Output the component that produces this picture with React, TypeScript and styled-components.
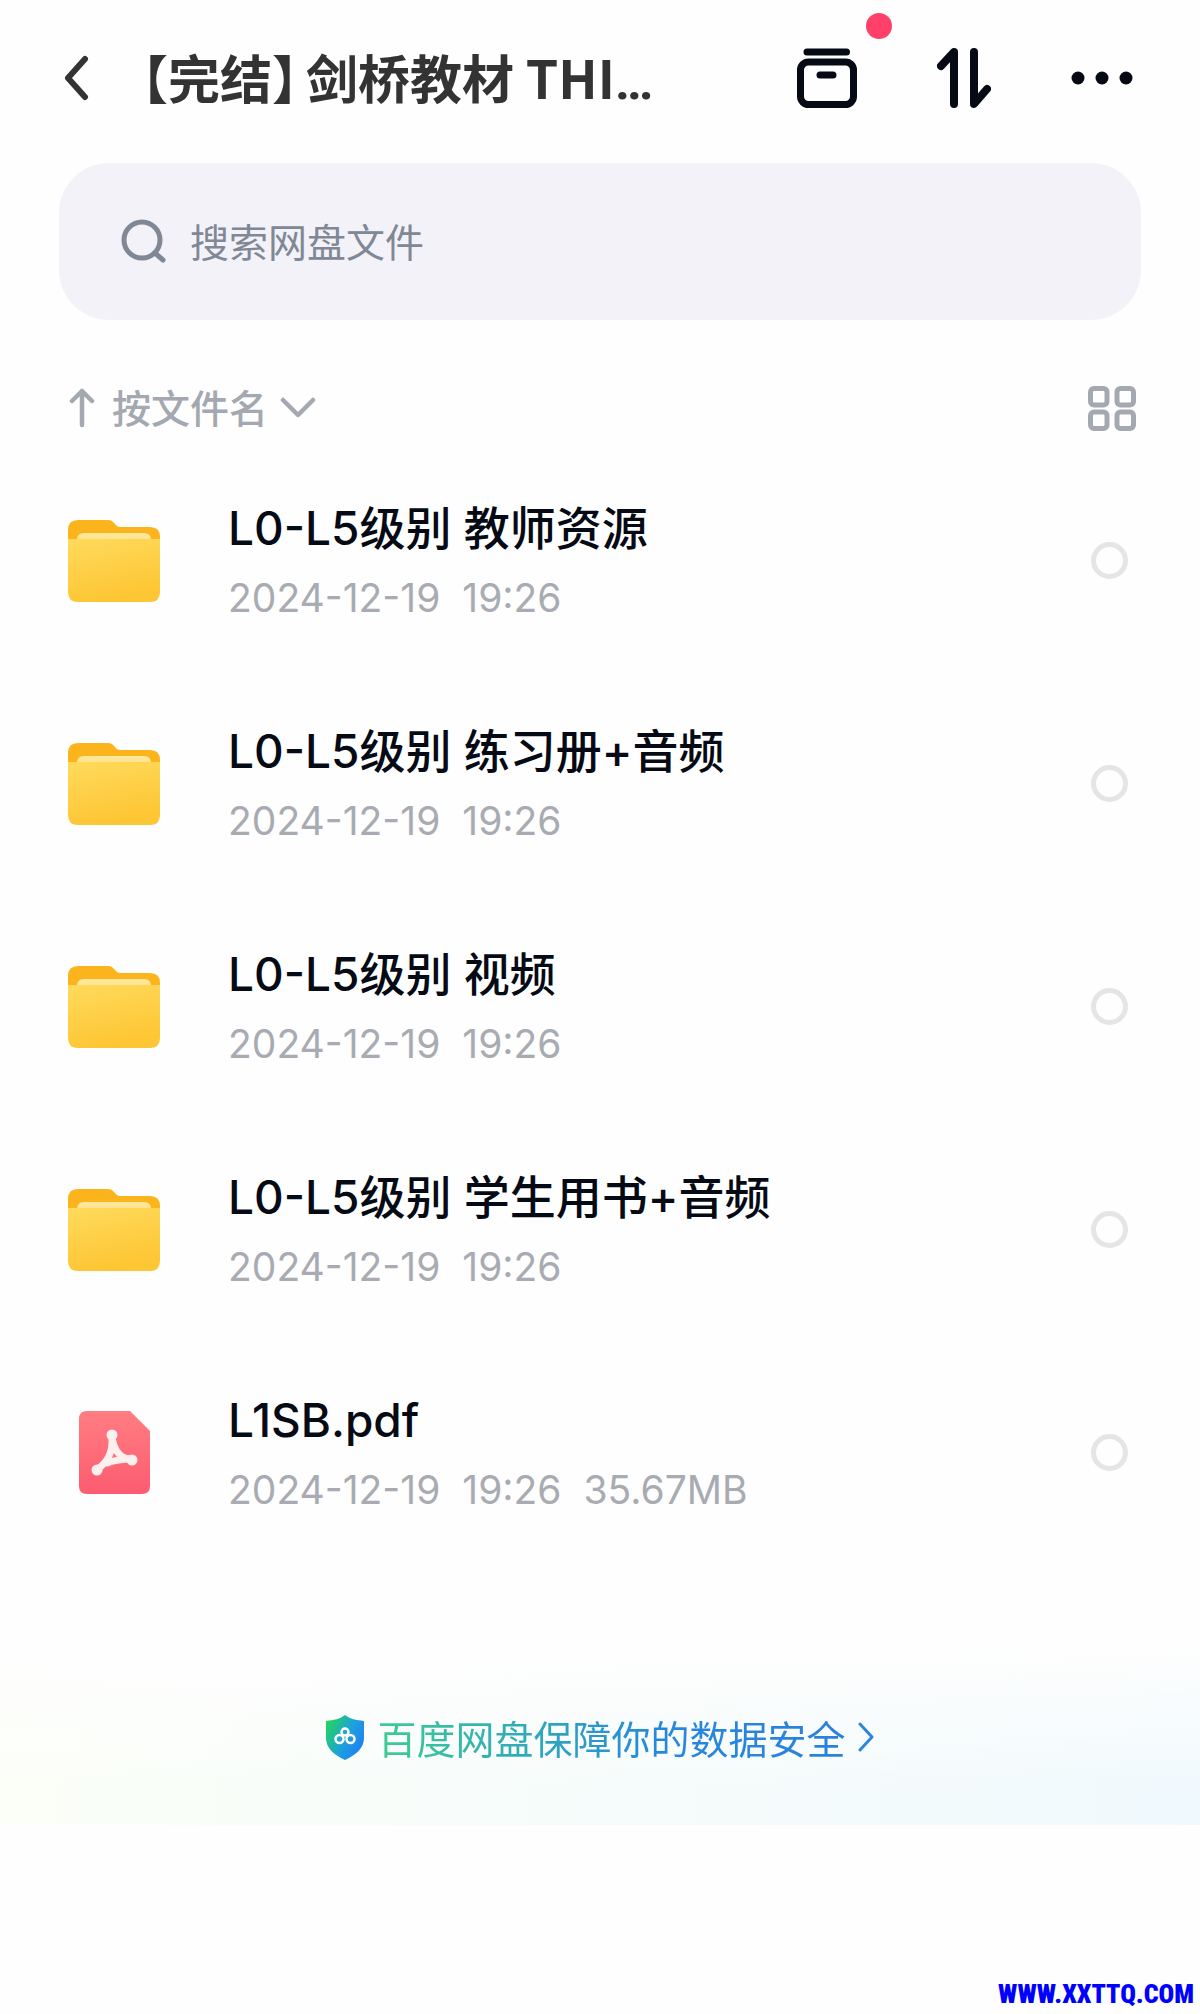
import React from "react";
import styled, { createGlobalStyle } from "styled-components";

const GlobalStyle = createGlobalStyle`
  * { box-sizing: border-box; }
  body {
    margin: 0;
    background: #fefefe;
    font-family: Inter, "Noto Sans CJK SC", sans-serif;
    color: #050a14;
  }
  button, input { font: inherit; }
`;

const Page = styled.div`
  min-height: 100vh;
  display: flex;
  flex-direction: column;
`;

const Header = styled.header`
  display: flex;
  align-items: center;
  height: 156px;
  padding: 0 67px 0 64px;
`;

const IconButton = styled.button`
  position: relative;
  display: flex;
  padding: 0;
  border: 0;
  background: none;
  color: inherit;
  cursor: pointer;
`;

const Title = styled.h1`
  flex: 1;
  min-width: 0;
  margin: 0 0 0 50px;
  padding-top: 2px;
  font-family: "Noto Sans CJK SC", sans-serif;
  font-size: 52px;
  line-height: 72px;
  font-weight: 700;
  color: #333;
  white-space: nowrap;
`;

const Tag = styled.span`
  margin-right: 8px;
  font-feature-settings: "halt";
`;

const Dots = styled.span`
  font-family: Roboto, sans-serif;
`;

const Actions = styled.div`
  display: flex;
  align-items: center;
  gap: 80px;
`;

const Badge = styled.span`
  position: absolute;
  top: -35px;
  left: 69px;
  width: 26px;
  height: 26px;
  border-radius: 50%;
  background: #ff4069;
`;

const SearchBox = styled.label`
  display: flex;
  align-items: center;
  gap: 24px;
  height: 157px;
  margin: 7px 59px 0;
  padding: 0 62px 2px;
  border-radius: 50px;
  background: #f2f2f8;
  color: #808896;
`;

const SearchInput = styled.input`
  flex: 1;
  min-width: 0;
  padding: 0 0 2px;
  border: 0;
  outline: 0;
  background: none;
  font-family: "Noto Sans CJK SC", sans-serif;
  font-size: 39px;
  line-height: 56px;
  color: #808896;
  &::placeholder { color: #808896; opacity: 1; }
`;

const Toolbar = styled.div`
  display: flex;
  align-items: center;
  justify-content: space-between;
  padding: 58px 64px 11px 69px;
  color: #a3a8b1;
`;

const SortButton = styled(IconButton)`
  align-items: center;
  gap: 17px;
  font-family: "Noto Sans CJK SC", sans-serif;
  font-size: 39px;
  line-height: 56px;
  font-weight: 500;
`;

const SortLabel = styled.span`
  margin-right: -5px;
  padding-bottom: 4px;
`;

const FileList = styled.ul`
  margin: 0;
  padding: 0;
  list-style: none;
`;

const FileRow = styled.li`
  display: grid;
  grid-template-columns: 92px 1fr 37px;
  column-gap: 68px;
  align-items: center;
  height: 223px;
  padding: 0 72px 0 68px;
`;

const FileIcon = styled.div`
  display: flex;
  justify-content: center;
`;

const FileText = styled.label`
  display: block;
  min-width: 0;
  padding-top: 2px;
`;

const FileName = styled.span`
  display: block;
  font-size: 46px;
  line-height: 72px;
  font-weight: 500;
`;

const FileMeta = styled.span`
  display: block;
  font-size: 39px;
  line-height: 68px;
  font-weight: 400;
  color: #a8acb2;
  white-space: pre;
`;

const Check = styled.input`
  appearance: none;
  width: 37px;
  height: 37px;
  margin: 0;
  border: 5px solid #e5e5e5;
  border-radius: 50%;
  cursor: pointer;
  &:checked { border-color: #1f86f0; background: #1f86f0; }
`;

const Banner = styled.footer`
  display: flex;
  justify-content: center;
  align-items: center;
  height: 177px;
  margin-top: 84px;
  background:
    linear-gradient(to bottom, #fefefe 0%, #fefefe00 80%),
    linear-gradient(to right, #fcfff8 0%, #f8fdfa 30%, #f5fbfb 60%, #f0f9fd 100%);
`;

const BannerLink = styled.a`
  display: flex;
  align-items: center;
  gap: 12px;
  text-decoration: none;
  color: #2b87dc;
`;

const BannerText = styled.span`
  font-family: "Noto Sans CJK SC", sans-serif;
  font-size: 39px;
  line-height: 56px;
  background: linear-gradient(to right, #3dcc92 0%, #2fa6bd 35%, #2688dc 60%, #2b80dc 100%);
  background-clip: text;
  color: transparent;
`;

const Watermark = styled.a`
  align-self: flex-end;
  margin-top: auto;
  padding: 0 6px 4px 0;
  font-family: Impact, "Roboto Condensed", "Liberation Sans Narrow", "Liberation Sans", sans-serif;
  font-size: 26px;
  line-height: 32px;
  font-weight: 900;
  color: #0000ff;
  text-decoration: none;
`;

const BackIcon = () => (
  <svg width="28" height="48" viewBox="0 0 28 48" fill="none" stroke="#333" strokeWidth="6" strokeLinecap="round" strokeLinejoin="round">
    <path d="M21 5 4 24l17 19" />
  </svg>
);

const BoxIcon = () => (
  <svg width="60" height="60" viewBox="0 0 60 60" fill="none" stroke="currentColor" strokeWidth="7" strokeLinecap="round">
    <path d="M10 4h39.500M23 27h13" />
    <rect x="3.500" y="14" width="53" height="42.500" rx="8" />
  </svg>
);

const TransferIcon = () => (
  <svg width="54" height="62" viewBox="0 0 54 62" fill="none" stroke="currentColor" strokeWidth="8" strokeLinecap="round" strokeLinejoin="round">
    <path d="M17 57V5L4 19M37 5v52l13-15" />
  </svg>
);

const MoreIcon = () => (
  <svg width="62" height="14" viewBox="0 0 62 14" fill="currentColor">
    <circle cx="7" cy="7" r="6.500" />
    <circle cx="31" cy="7" r="6.500" />
    <circle cx="55" cy="7" r="6.500" />
  </svg>
);

const SearchIcon = () => (
  <svg width="45" height="44" viewBox="0 0 45 44" fill="none" stroke="currentColor" strokeWidth="5" strokeLinecap="round">
    <circle cx="21" cy="21" r="18" />
    <path d="m34 34 8 7" />
  </svg>
);

const ArrowUpIcon = () => (
  <svg width="26" height="40" viewBox="0 0 26 40" fill="none" stroke="currentColor" strokeWidth="4.500" strokeLinecap="round" strokeLinejoin="round">
    <path d="M13 37V3M3 13 13 3l10 10" />
  </svg>
);

const ChevronDownIcon = () => (
  <svg width="36" height="22" viewBox="0 0 36 22" fill="none" stroke="currentColor" strokeWidth="4.500" strokeLinecap="round" strokeLinejoin="round">
    <path d="m3 3 15 15L33 3" />
  </svg>
);

const GridIcon = () => (
  <svg width="48" height="45" viewBox="0 0 48 45" fill="none" stroke="currentColor" strokeWidth="5">
    <rect x="2.500" y="2.500" width="16.500" height="16.500" rx="3.500" />
    <rect x="29" y="2.500" width="16.500" height="16.500" rx="3.500" />
    <rect x="2.500" y="26" width="16.500" height="16.500" rx="3.500" />
    <rect x="29" y="26" width="16.500" height="16.500" rx="3.500" />
  </svg>
);

const FolderIcon = () => (
  <svg width="92" height="82" viewBox="0 0 92 82">
    <defs>
      <linearGradient id="folderFront" x1="0" y1="0" x2="0.300" y2="1">
        <stop offset="0" stopColor="#ffda5c" />
        <stop offset="1" stopColor="#fdc634" />
      </linearGradient>
      <linearGradient id="folderPaper" x1="0" y1="0" x2="0" y2="1">
        <stop offset="0" stopColor="#ffe9a0" />
        <stop offset="1" stopColor="#ffe28a" />
      </linearGradient>
    </defs>
    <path d="M0 10Q0 0 10 0h30q4 0 6 3l3 3q1 1 4 1h29q10 0 10 10v14H0Z" fill="#fbb41c" />
    <path d="M9 20q0-7 7-7h60q7 0 7 7H9Z" fill="url(#folderPaper)" />
    <path d="M0 19h92v53q0 10-10 10H10q-10 0-10-10Z" fill="url(#folderFront)" />
  </svg>
);

const PdfIcon = () => (
  <svg width="71" height="83" viewBox="0 0 71 83">
    <defs>
      <linearGradient id="pdfSheet" x1="0" y1="0" x2="0" y2="1">
        <stop offset="0" stopColor="#ff7d82" />
        <stop offset="1" stopColor="#fd5c70" />
      </linearGradient>
    </defs>
    <path d="M8 0h43l20 20v55q0 8-8 8H8q-8 0-8-8V8q0-8 8-8Z" fill="url(#pdfSheet)" />
    <g fill="none" stroke="#fff0f0" strokeWidth="7" strokeLinecap="round" strokeLinejoin="round">
      <path d="M33 23c0 9 1 14-3 22-3 6-6 9-11 13" />
      <path d="M33 23c0 9 2 15 8 21 3 3 6 4 12 4" />
      <path d="M53 48c-9 0-17 1-25 4" />
    </g>
    <circle cx="33" cy="24" r="5.500" fill="#fff0f0" />
    <circle cx="18" cy="59" r="5.500" fill="#fff0f0" />
    <circle cx="53" cy="49" r="5.500" fill="#fff0f0" />
  </svg>
);

const ShieldIcon = () => (
  <svg width="40" height="46" viewBox="0 0 40 46">
    <defs>
      <linearGradient id="shieldFill" x1="0" y1="0.200" x2="1" y2="0.800">
        <stop offset="0" stopColor="#22d65c" />
        <stop offset="0.550" stopColor="#1d9fe0" />
        <stop offset="1" stopColor="#1f7bf5" />
      </linearGradient>
    </defs>
    <path d="M20 1c5 4 11 5 19 6v17c0 10-8 17-19 22C9 41 1 34 1 24V7c8-1 14-2 19-6Z" fill="url(#shieldFill)" />
    <g fill="none" stroke="#fff" strokeWidth="2.500">
      <circle cx="20" cy="18" r="3.500" />
      <circle cx="14.500" cy="25" r="4" />
      <circle cx="25.500" cy="25" r="4" />
    </g>
  </svg>
);

const ChevronRightIcon = () => (
  <svg width="17" height="32" viewBox="0 0 17 32" fill="none" stroke="currentColor" strokeWidth="3" strokeLinecap="round" strokeLinejoin="round">
    <path d="m2 3 12 13L2 29" />
  </svg>
);

type FileItem = { kind: "folder" | "pdf"; name: string; meta: string };

const files: FileItem[] = [
  { kind: "folder", name: "L0-L5级别 教师资源", meta: "2024-12-19  19:26" },
  { kind: "folder", name: "L0-L5级别 练习册+音频", meta: "2024-12-19  19:26" },
  { kind: "folder", name: "L0-L5级别 视频", meta: "2024-12-19  19:26" },
  { kind: "folder", name: "L0-L5级别 学生用书+音频", meta: "2024-12-19  19:26" },
  { kind: "pdf", name: "L1SB.pdf", meta: "2024-12-19  19:26  35.67MB" },
];

export default function App() {
  return (
    <Page>
      <GlobalStyle />
      <Header>
        <IconButton type="button" aria-label="返回"><BackIcon /></IconButton>
        <Title><Tag>【完结】</Tag>剑桥教材 THI<Dots>…</Dots></Title>
        <Actions>
          <IconButton type="button" aria-label="传输列表"><BoxIcon /><Badge /></IconButton>
          <IconButton type="button" aria-label="排序"><TransferIcon /></IconButton>
          <IconButton type="button" aria-label="更多"><MoreIcon /></IconButton>
        </Actions>
      </Header>
      <SearchBox>
        <SearchIcon />
        <SearchInput type="text" placeholder="搜索网盘文件" aria-label="搜索网盘文件" />
      </SearchBox>
      <Toolbar>
        <SortButton type="button">
          <ArrowUpIcon />
          <SortLabel>按文件名</SortLabel>
          <ChevronDownIcon />
        </SortButton>
        <IconButton type="button" aria-label="网格视图"><GridIcon /></IconButton>
      </Toolbar>
      <FileList>
        {files.map((file, i) => (
          <FileRow key={file.name}>
            <FileIcon>{file.kind === "folder" ? <FolderIcon /> : <PdfIcon />}</FileIcon>
            <FileText htmlFor={`file-${i}`}>
              <FileName>{file.name}</FileName>
              <FileMeta>{file.meta}</FileMeta>
            </FileText>
            <Check type="checkbox" id={`file-${i}`} />
          </FileRow>
        ))}
      </FileList>
      <Banner>
        <BannerLink href="#security">
          <ShieldIcon />
          <BannerText>百度网盘保障你的数据安全</BannerText>
          <ChevronRightIcon />
        </BannerLink>
      </Banner>
      <Watermark href="#home">WWW.XXTTQ.COM</Watermark>
    </Page>
  );
}
